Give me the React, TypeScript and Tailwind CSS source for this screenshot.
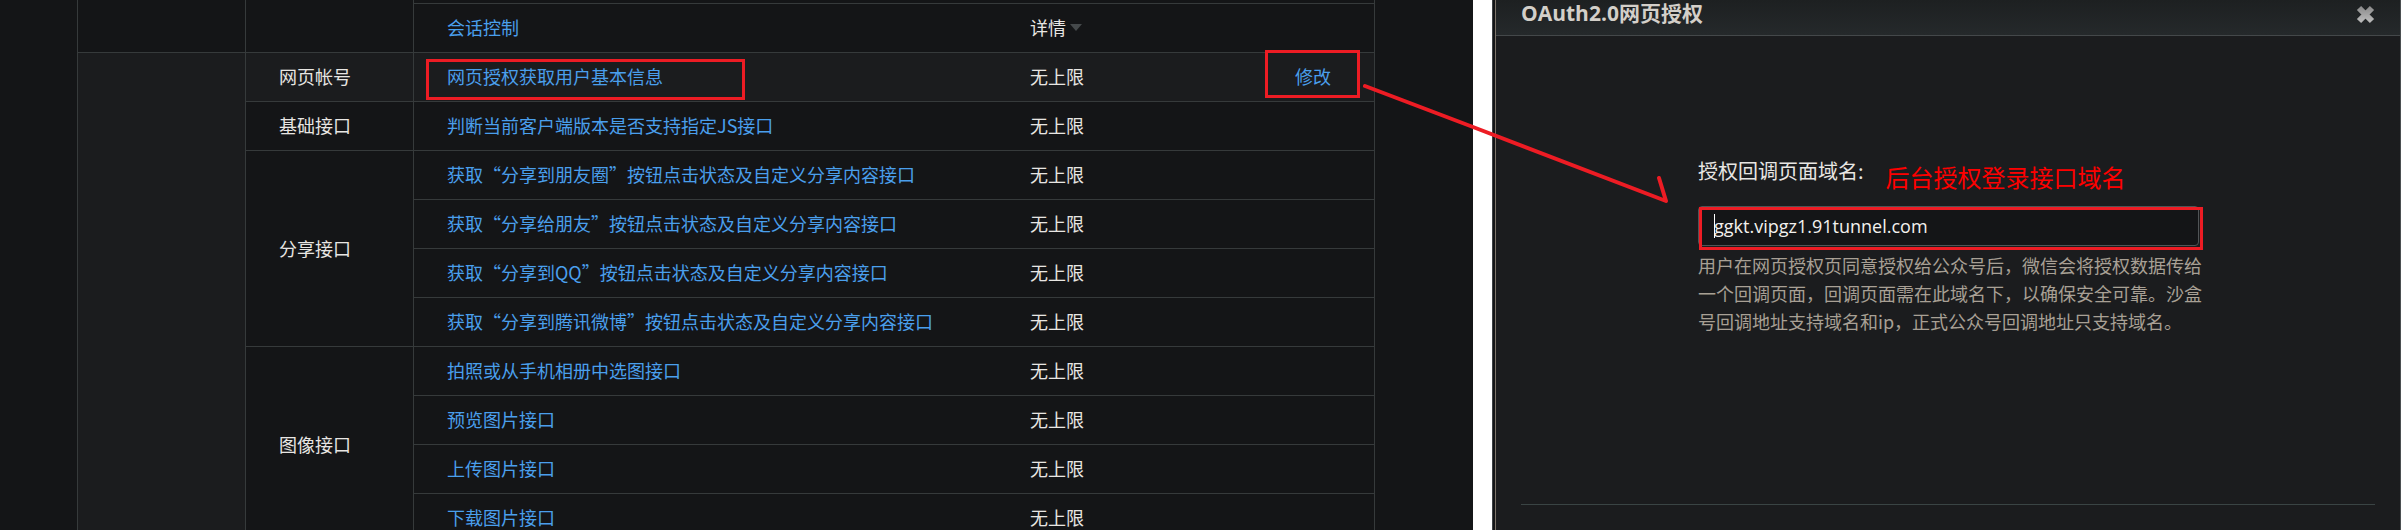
import type { ReactNode } from "react";

type Row = { group?: string; span?: number; name: string; active?: boolean };

const rows: Row[] = [
  { group: "网页帐号", span: 1, name: "网页授权获取用户基本信息", active: true },
  { group: "基础接口", span: 1, name: "判断当前客户端版本是否支持指定JS接口" },
  { group: "分享接口", span: 4, name: "获取“分享到朋友圈”按钮点击状态及自定义分享内容接口" },
  { name: "获取“分享给朋友”按钮点击状态及自定义分享内容接口" },
  { name: "获取“分享到QQ”按钮点击状态及自定义分享内容接口" },
  { name: "获取“分享到腾讯微博”按钮点击状态及自定义分享内容接口" },
  { group: "图像接口", span: 4, name: "拍照或从手机相册中选图接口" },
  { name: "预览图片接口" },
  { name: "上传图片接口" },
  { name: "下载图片接口" },
];

const line = "border-[#363a3b]";

function Marked({ box, children }: { box: string; children: ReactNode }) {
  return (
    <span className="relative inline-block">
      {children}
      <span className={`pointer-events-none absolute border-3 border-[#ed1c24] ${box}`} />
    </span>
  );
}

function Link({ children }: { children: ReactNode }) {
  return (
    <a href="#" className="text-[#4a9fec]">
      {children}
    </a>
  );
}

function PermissionTable() {
  return (
    <table className="w-full table-fixed border-separate border-spacing-0 text-left text-lg leading-6 text-[#e8e6e3]">
      <colgroup>
        <col className="w-[168px]" />
        <col className="w-[168px]" />
        <col />
        <col className="w-[265px]" />
        <col className="w-[113px]" />
      </colgroup>
      <tbody>
        <tr className="h-1">
          <td rowSpan={2} className={`border-b border-l ${line}`} />
          <td rowSpan={2} className={`border-b border-l ${line}`} />
          <td className={`border-b border-l ${line}`} />
          <td className={`border-b ${line}`} />
          <td className={`border-r border-b ${line}`} />
        </tr>
        <tr className="h-[49px]">
          <td className={`border-b border-l px-[33px] pb-[2px] ${line}`}>
            <Link>会话控制</Link>
          </td>
          <td className={`border-b px-[33px] pb-[2px] ${line}`}>
            <button type="button" className="flex items-center gap-1">
              详情
              <svg width="12" height="7" viewBox="0 0 12 7" aria-hidden="true">
                <path d="M0 0H12L6 7Z" fill="#45494b" />
              </svg>
            </button>
          </td>
          <td className={`border-r border-b ${line}`} />
        </tr>
        {rows.map((row, i) => (
          <tr key={row.name} className={row.active ? "h-[49px] bg-[#1b1c1e]" : "h-[49px]"}>
            {i === 0 && <td rowSpan={rows.length} className={`border-b border-l bg-[#1b1c1e] ${line}`} />}
            {row.group && (
              <th
                scope="rowgroup"
                rowSpan={row.span}
                className={`border-b border-l px-[33px] pb-[2px] font-normal ${line}`}
              >
                {row.group}
              </th>
            )}
            <td className={`border-b border-l px-[33px] pb-[2px] whitespace-nowrap ${line}`}>
              {row.active ? (
                <Marked box="-top-[5px] -left-[21px] h-[41px] w-[319px]">
                  <Link>{row.name}</Link>
                </Marked>
              ) : (
                <Link>{row.name}</Link>
              )}
            </td>
            <td className={`border-b px-[33px] pb-[2px] ${line}`}>无上限</td>
            <td className={`border-r border-b px-[33px] pb-[2px] whitespace-nowrap ${line}`}>
              {row.active && (
                <Marked box="-top-[14px] -left-[30px] h-12 w-[95px]">
                  <Link>修改</Link>
                </Marked>
              )}
            </td>
          </tr>
        ))}
      </tbody>
    </table>
  );
}

function AuthDialog() {
  return (
    <section
      role="dialog"
      aria-labelledby="dialog-title"
      className="flex h-full flex-col border-r border-l border-r-[#4b4f51] border-l-[#7d746a] bg-[#1b1c1e]"
    >
      <header className="flex h-9 items-start justify-between border-b border-[#44484a] bg-linear-to-b from-[#1d2021] to-[#25292b] px-[25px]">
        <h2
          id="dialog-title"
          className="font-['Open_Sans','Noto_Sans_CJK_SC',sans-serif] text-[21px] leading-[26px] font-bold text-[#d3cfc9]"
        >
          OAuth2.0网页授权
        </h2>
        <button type="button" aria-label="关闭" className="pt-[5px]">
          <svg width="19" height="19" viewBox="0 0 19 19" aria-hidden="true">
            <defs>
              <linearGradient id="cross" x1="0" y1="0" x2="0" y2="1">
                <stop offset="0" stopColor="#8f8f8f" />
                <stop offset="1" stopColor="#b8b8b8" />
              </linearGradient>
            </defs>
            <path d="M3 3L16 16M16 3L3 16" stroke="url(#cross)" strokeWidth="6" />
          </svg>
        </button>
      </header>
      <form className="flex flex-col pt-[119px] pl-[202px]" onSubmit={(e) => e.preventDefault()}>
        <div className="flex h-[51px] items-start gap-[22px]">
          <label htmlFor="domain" className="text-xl leading-8 text-[#e8e6e3]">
            授权回调页面域名:
          </label>
          <span className="pt-1 text-2xl leading-9 text-[#fe0000]">后台授权登录接口域名</span>
        </div>
        <div className="relative w-[501px]">
          <input
            id="domain"
            type="text"
            defaultValue="ggkt.vipgz1.91tunnel.com"
            className="block h-10 w-full rounded border border-[#505456] bg-[#141517] pr-4 pb-px pl-[15px] font-['Open_Sans','Noto_Sans_CJK_SC',sans-serif] text-lg text-[#f3f1ee] outline-none"
          />
          <span className="absolute top-2 left-4 h-6 w-px bg-white" />
          <span className="pointer-events-none absolute top-px left-px h-[43px] w-[504px] border-3 border-[#ed1c24]" />
        </div>
        <p className="w-[506px] pt-[5px] text-lg leading-7 text-[#a8a095]">
          用户在网页授权页同意授权给公众号后，微信会将授权数据传给一个回调页面，回调页面需在此域名下，以确保安全可靠。沙盒号回调地址支持域名和ip，正式公众号回调地址只支持域名。
        </p>
      </form>
      <footer className="mx-[25px] mt-auto h-[26px] border-t border-[#3a4444]" />
    </section>
  );
}

export default function App() {
  return (
    <main
      lang="zh-CN"
      className="relative grid h-screen grid-cols-[1473fr_909fr] gap-[19px] overflow-hidden bg-white font-['Noto_Sans_CJK_SC',sans-serif]"
    >
      <div className="min-h-0 min-w-0 bg-[#141517] pr-[98px] pl-[77px]">
        <PermissionTable />
      </div>
      <div className="min-h-0 min-w-0 border-l border-[#3c4043] bg-[#141517] pl-[2px]">
        <AuthDialog />
      </div>
      <svg
        className="pointer-events-none absolute top-[83px] left-[1363px]"
        width="308"
        height="124"
        viewBox="0 0 308 124"
        aria-hidden="true"
      >
        <path
          d="M2 3L110 44L303 118L296 95"
          fill="none"
          stroke="#ed1c24"
          strokeWidth="4"
          strokeLinecap="round"
          strokeLinejoin="round"
        />
      </svg>
    </main>
  );
}
